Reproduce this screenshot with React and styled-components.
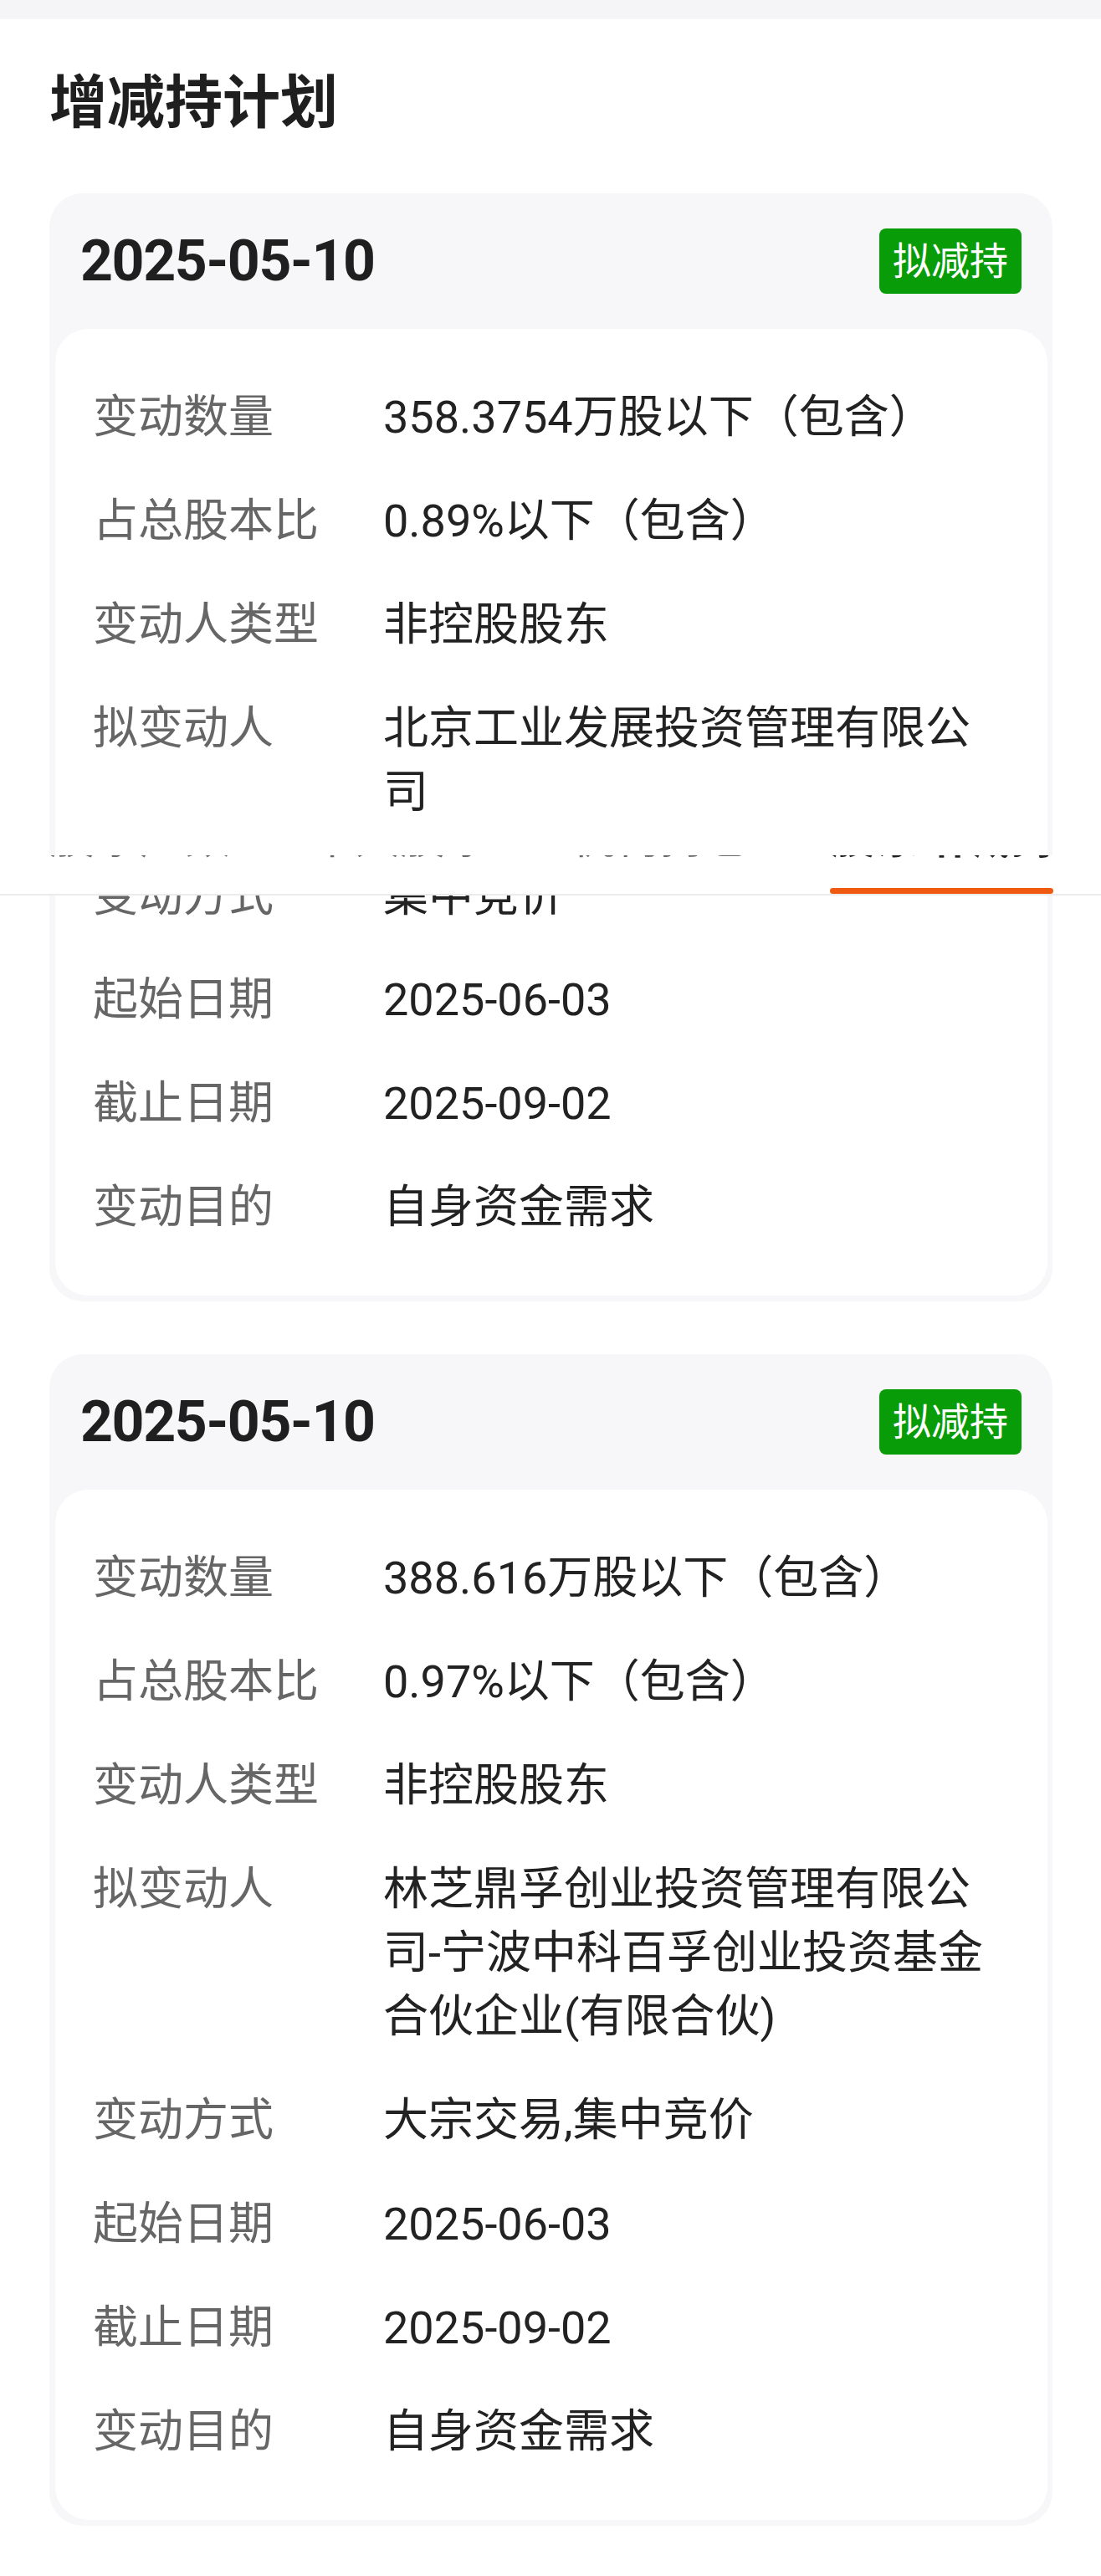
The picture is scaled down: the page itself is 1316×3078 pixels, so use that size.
import React from 'react';
import styled, { createGlobalStyle } from 'styled-components';

const GlobalStyle = createGlobalStyle`
  body {
    margin: 0;
    background: #fff;
    font-family: Roboto, "Noto Sans CJK SC", sans-serif;
    color: #222;
  }
`

const Page = styled.div`
  position: relative;
  width: 1316px;
  min-height: 3078px;
  background: #fff;
`
const TopBand = styled.div`
  height: 23px;
  background: #f5f5f7;
`
const Section = styled.section`
  padding: 53px 58px 0 59px;
`
const Title = styled.h2`
  margin: 0 0 59px;
  font-size: 69px;
  line-height: 96px;
  font-weight: 700;
  color: #1f1f1f;
`
const PlanList = styled.div`
  display: flex;
  flex-direction: column;
  gap: 63px;
`
const Card = styled.div`
  background: #f7f7f9;
  border-radius: 40px;
  padding: 0 6px 7px 7px;
`
const CardHead = styled.div`
  height: 162px;
  display: flex;
  align-items: center;
  justify-content: space-between;
  padding: 0 31px 0 30px;
`
const DateText = styled.div`
  font-size: 68px;
  line-height: 1;
  font-weight: 700;
  letter-spacing: -1.4px;
  color: #1f1f1f;
`
const Badge = styled.span`
  height: 78px;
  line-height: 78px;
  padding: 0 16px;
  border-radius: 8px;
  background: #089c08;
  color: #fff;
  font-size: 46px;
`
const Body = styled.div`
  background: #fff;
  border-radius: 40px;
  padding: 68px 52px 67px 45px;
  display: flex;
  flex-direction: column;
  gap: 48px;
`
const Row = styled.div`
  display: grid;
  grid-template-columns: 347px 1fr;
  font-size: 54px;
  line-height: 76px;
`
const Label = styled.div`
  color: #666;
`
const Value = styled.div`
  color: #222;
`

// sticky tab bar caught mid-scroll, lying over the list
const StickyTabs = styled.div`
  position: absolute;
  top: 1022px;
  left: 0;
  right: 0;
  height: 46px;
  background: #fff;
  border-bottom: 2px solid #ebebeb;
  overflow: hidden;
`
const TabRow = styled.div`
  display: flex;
  gap: 95px;
  padding-left: 59px;
  margin-top: -47px;
`
const Tab = styled.div`
  position: relative;
  font-size: 54px;
  line-height: 54px;
  white-space: nowrap;
  color: ${p => (p.active ? '#1f1f1f' : '#666')};
  font-weight: ${p => (p.active ? 700 : 400)};

  &::after {
    content: '';
    display: ${p => (p.active ? 'block' : 'none')};
    position: absolute;
    top: 86px;
    left: 0;
    right: 3px;
    height: 7px;
    border-radius: 4px;
    background: #f05a10;
  }
`

const plans = [
  {
    date: '2025-05-10',
    type: '拟减持',
    rows: [
      ['变动数量', '358.3754万股以下（包含）'],
      ['占总股本比', '0.89%以下（包含）'],
      ['变动人类型', '非控股股东'],
      ['拟变动人', '北京工业发展投资管理有限公司'],
      ['变动方式', '集中竞价'],
      ['起始日期', '2025-06-03'],
      ['截止日期', '2025-09-02'],
      ['变动目的', '自身资金需求'],
    ],
  },
  {
    date: '2025-05-10',
    type: '拟减持',
    rows: [
      ['变动数量', '388.616万股以下（包含）'],
      ['占总股本比', '0.97%以下（包含）'],
      ['变动人类型', '非控股股东'],
      ['拟变动人', '林芝鼎孚创业投资管理有限公司-宁波中科百孚创业投资基金合伙企业(有限合伙)'],
      ['变动方式', '大宗交易,集中竞价'],
      ['起始日期', '2025-06-03'],
      ['截止日期', '2025-09-02'],
      ['变动目的', '自身资金需求'],
    ],
  },
]

const tabs = ['股东户数', '十大股东', '机构持仓', '股东增减持']

export default function App() {
  return (
    <Page>
      <GlobalStyle />
      <TopBand />
      <Section>
        <Title>增减持计划</Title>
        <PlanList>
          {plans.map((plan, i) => (
            <Card key={i}>
              <CardHead>
                <DateText>{plan.date}</DateText>
                <Badge>{plan.type}</Badge>
              </CardHead>
              <Body>
                {plan.rows.map(([label, value]) => (
                  <Row key={label}>
                    <Label>{label}</Label>
                    <Value>{value}</Value>
                  </Row>
                ))}
              </Body>
            </Card>
          ))}
        </PlanList>
      </Section>
      <StickyTabs>
        <TabRow>
          {tabs.map((t, i) => (
            <Tab key={t} active={i === tabs.length - 1}>{t}</Tab>
          ))}
        </TabRow>
      </StickyTabs>
    </Page>
  )
}
